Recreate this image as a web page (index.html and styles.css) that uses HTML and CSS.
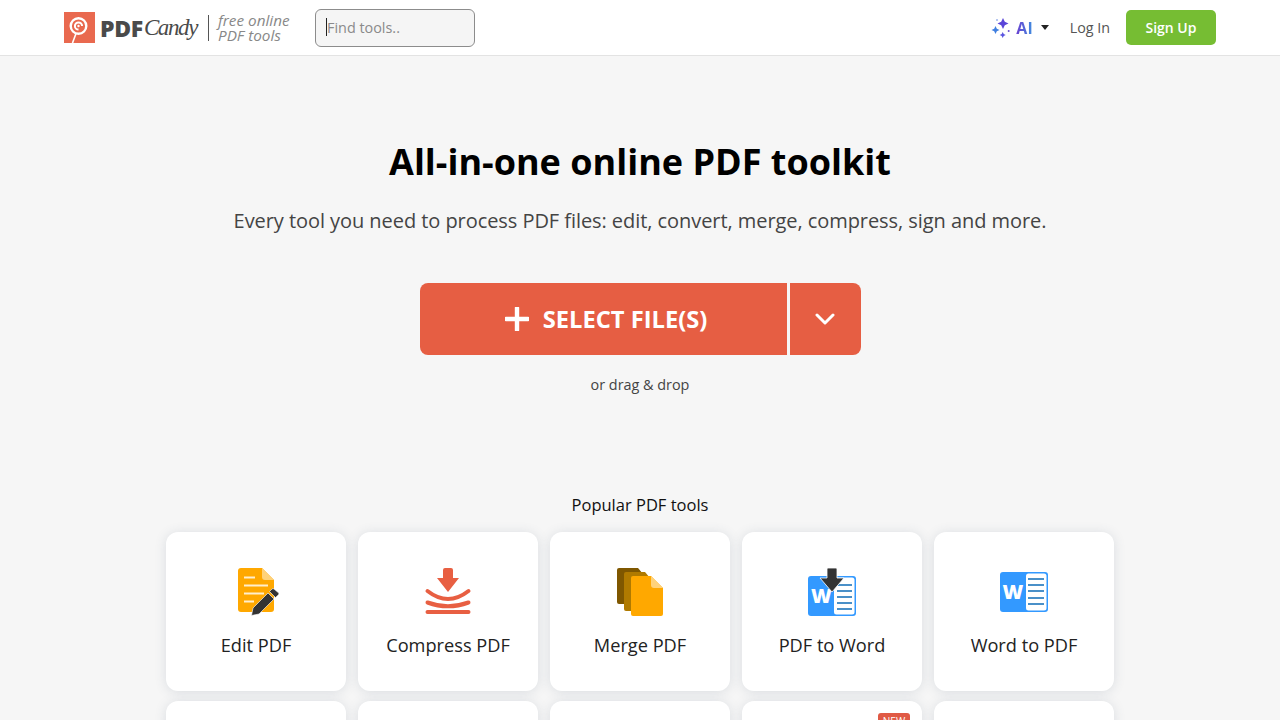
FILE: index.html
```html
<!DOCTYPE html>
<html lang="en">
<head>
    <meta charset="UTF-8">
    <meta name="viewport" content="width=device-width, initial-scale=1.0">
    <title>PDF Candy</title>
    <link rel="stylesheet" href="styles.css">
</head>
<body>
    <header class="header">
        <div class="header-left">
            <a class="logo" href="#">
                <svg class="logo-mark" width="31" height="31" viewBox="0 0 31 31">
                    <rect width="31" height="31" fill="#e9694f"/>
                    <path d="M12 21.5 L8.5 31" stroke="#fff" stroke-width="1.6" fill="none"/>
                    <circle cx="14.5" cy="14" r="7.8" fill="none" stroke="#fff" stroke-width="2.4"/>
                    <path d="M14.5 17.6 A3.6 3.6 0 1 1 18.1 14" fill="none" stroke="#fff" stroke-width="2"/>
                    <circle cx="14.5" cy="14" r="1.2" fill="#fff"/>
                </svg>
                <span class="logo-pdf">PDF</span><span class="logo-candy">Candy</span>
            </a>
            <span class="divider"></span>
            <div class="tagline">free online<br>PDF tools</div>
            <div class="search">
                <input class="search-input" type="text" placeholder="Find tools..">
                <span class="search-caret"></span>
            </div>
        </div>
        <nav class="header-right">
            <a class="ai-link" href="#">
                <svg width="20" height="20" viewBox="0 0 20 20">
                    <path d="M12 0 L13.8 3.7 L17.5 5.5 L13.8 7.3 L12 11 L10.2 7.3 L6.5 5.5 L10.2 3.7 Z" fill="#5a45d8"/>
                    <path d="M4.5 8 L5.8 10.7 L8.5 12 L5.8 13.3 L4.5 16 L3.2 13.3 L0.5 12 L3.2 10.7 Z" fill="#3f7fe0"/>
                    <path d="M11.7 14 L12.7 16 L14.7 17 L12.7 18 L11.7 20 L10.7 18 L8.7 17 L10.7 16 Z" fill="#5a55e0"/>
                    <circle cx="17.7" cy="13" r="1" fill="#6a4fd0"/>
                    <circle cx="6" cy="2" r="0.8" fill="#5a7fe0"/>
                </svg>
                <span class="ai-text">AI</span>
                <span class="ai-caret"></span>
            </a>
            <a class="login" href="#">Log In</a>
            <a class="signup" href="#">Sign Up</a>
        </nav>
    </header>

    <main class="main">
        <h1 class="title">All-in-one online PDF toolkit</h1>
        <p class="subtitle">Every tool you need to process PDF files: edit, convert, merge, compress, sign and more.</p>

        <div class="select-group">
            <button class="select-btn" type="button">
                <svg width="24" height="24" viewBox="0 0 24 24">
                    <path d="M12 1 V23 M1 12 H23" stroke="#fff" stroke-width="4.4" stroke-linecap="round" fill="none"/>
                </svg>
                SELECT FILE(S)
            </button>
            <button class="select-more" type="button" aria-label="More">
                <svg width="20" height="12" viewBox="0 0 20 12">
                    <path d="M2 2 L10 10 L18 2" stroke="#fff" stroke-width="3" stroke-linecap="round" stroke-linejoin="round" fill="none"/>
                </svg>
            </button>
        </div>
        <p class="drop-note">or drag &amp; drop</p>

        <h2 class="tools-title">Popular PDF tools</h2>
        <div class="tools">
            <a class="tool" href="#">
                <svg class="tool-icon" width="48" height="48" viewBox="0 0 48 48">
                    <path d="M9 0 H30 L42 12 V41 a3 3 0 0 1 -3 3 H9 a3 3 0 0 1 -3 -3 V3 a3 3 0 0 1 3 -3 Z" fill="#ffa800"/>
                    <path d="M30 0 L42 12 H33 a3 3 0 0 1 -3 -3 Z" fill="#ffd27a"/>
                    <path d="M12 9.5 H23 M12 17.5 H36 M12 25.5 H32 M12 33.5 H22" stroke="#ffeecc" stroke-width="1.8" fill="none"/>
                    <path d="M19.5 47.5 L21 40 L36 25 L42 31 L27 46 Z M37.5 23.5 L40 21 a1.5 1.5 0 0 1 2 0 L46.5 24.8 a1.5 1.5 0 0 1 0 2 L43.5 29.5 Z" fill="#333" stroke="#fff" stroke-width="0.6"/>
                </svg>
                <span class="tool-name">Edit PDF</span>
            </a>
            <a class="tool" href="#">
                <svg class="tool-icon" width="48" height="48" viewBox="0 0 48 48">
                    <path d="M21 0 H27 a2 2 0 0 1 2 2 V10 H35 L24 24 L13 10 H19 V2 a2 2 0 0 1 2 -2 Z" fill="#e85f42"/>
                    <path d="M3.5 23 Q24 39 44.5 23 M3.5 34.5 Q24 42 44.5 34.5 M3.5 44 H44.5" stroke="#e85f42" stroke-width="4" stroke-linecap="round" fill="none"/>
                </svg>
                <span class="tool-name">Compress PDF</span>
            </a>
            <a class="tool" href="#">
                <svg class="tool-icon" width="48" height="48" viewBox="0 0 48 48">
                    <path d="M3 0 H22 L32 12 V36 H3 a2 2 0 0 1 -2 -2 V2 a2 2 0 0 1 2 -2 Z" fill="#7f5700"/>
                    <path d="M10 4 H29 L39 16 V43 H10 a2 2 0 0 1 -2 -2 V6 a2 2 0 0 1 2 -2 Z" fill="#b07a00"/>
                    <path d="M17 8 H35 L47 20 V46 a2 2 0 0 1 -2 2 H17 a2 2 0 0 1 -2 -2 V10 a2 2 0 0 1 2 -2 Z" fill="#ffa800"/>
                    <path d="M35 8 L47 20 H38 a3 3 0 0 1 -3 -3 Z" fill="#ffd27a"/>
                </svg>
                <span class="tool-name">Merge PDF</span>
            </a>
            <a class="tool" href="#">
                <svg class="tool-icon" width="48" height="48" viewBox="0 0 48 48">
                    <rect y="8" width="48" height="40" rx="3" fill="#3399ff"/>
                    <rect x="26" y="9.5" width="20.5" height="37" rx="2.5" fill="#fff"/>
                    <path d="M29 17 H44 M29 23 H44 M29 29 H44 M29 35 H44 M29 41 H44" stroke="#4a90c8" stroke-width="2.2" fill="none"/>
                    <text class="word-letter" x="13.5" y="35" text-anchor="middle">W</text>
                    <path d="M20 0 H28 a1 1 0 0 1 1 1 V10 H36 L24 24 L12 10 H19 V1 a1 1 0 0 1 1 -1 Z" fill="#333" stroke="#fff" stroke-width="0.8"/>
                </svg>
                <span class="tool-name">PDF to Word</span>
            </a>
            <a class="tool" href="#">
                <svg class="tool-icon" width="48" height="48" viewBox="0 0 48 48">
                    <rect y="4" width="48" height="40" rx="3" fill="#3399ff"/>
                    <rect x="26" y="5.5" width="20.5" height="37" rx="2.5" fill="#fff"/>
                    <path d="M28 11 H44 M28 17 H44 M28 23 H44 M28 30 H44 M28 36 H44" stroke="#4a90c8" stroke-width="2.2" fill="none"/>
                    <text class="word-letter" x="13" y="31" text-anchor="middle">W</text>
                </svg>
                <span class="tool-name">Word to PDF</span>
            </a>
            <div class="tool"></div>
            <div class="tool"></div>
            <div class="tool"></div>
            <div class="tool"><span class="badge">NEW</span></div>
            <div class="tool"></div>
        </div>
    </main>
</body>
</html>
```

FILE: styles.css
```css
html, body {
    height: 100%;
    overflow: hidden;
}
body {
    margin: 0;
    font-family: "Open Sans", sans-serif;
    background-color: #f6f6f6;
    color: #000;
}
a {
    text-decoration: none;
    color: inherit;
}
.header {
    height: 55px;
    background-color: #fff;
    border-bottom: 1px solid #e3e3e3;
    display: flex;
    justify-content: space-between;
    align-items: center;
    padding: 0 64px;
}
.header-left {
    display: flex;
    align-items: center;
}
.logo {
    display: flex;
    align-items: center;
    width: 144px;
}
.logo-mark {
    margin-right: 5px;
    flex-shrink: 0;
}
.logo-pdf {
    font-size: 23px;
    font-weight: 800;
    color: #4a4a4a;
    letter-spacing: -0.3px;
}
.logo-candy {
    font-family: "Liberation Serif", serif;
    font-style: italic;
    font-size: 23px;
    color: #4a4a4a;
    letter-spacing: -1.4px;
    margin-left: 1px;
}
.divider {
    width: 1px;
    height: 26px;
    background-color: #555;
    margin-right: 9px;
}
.tagline {
    font-size: 15.3px;
    line-height: 15px;
    font-style: italic;
    color: #888;
    width: 97px;
}
.search {
    position: relative;
}
.search-input {
    display: block;
    width: 160px;
    height: 38px;
    box-sizing: border-box;
    padding: 0 11px;
    border: 1px solid #8c8c8c;
    border-radius: 6px;
    background-color: #f5f5f5;
    font-family: "Open Sans", sans-serif;
    font-size: 14.4px;
    outline: none;
}
.search-input::placeholder {
    color: #8a8a8a;
    opacity: 1;
}
.search-caret {
    position: absolute;
    left: 11px;
    top: 9px;
    width: 1px;
    height: 18px;
    background-color: #222;
}
.header-right {
    display: flex;
    align-items: center;
}
.ai-link {
    display: flex;
    align-items: center;
    margin-right: 21px;
}
.ai-text {
    font-size: 16px;
    font-weight: 700;
    margin-left: 5px;
    background: linear-gradient(90deg, #6a3fd0, #3f8fe0);
    -webkit-background-clip: text;
    background-clip: text;
    color: transparent;
}
.ai-caret {
    width: 0;
    height: 0;
    margin-left: 8px;
    border-left: 4.5px solid transparent;
    border-right: 4.5px solid transparent;
    border-top: 5px solid #222;
}
.login {
    font-size: 14.3px;
    color: #555;
    margin-right: 16px;
}
.signup {
    display: block;
    width: 90px;
    height: 35px;
    line-height: 35px;
    text-align: center;
    background-color: #76bd33;
    border-radius: 5px;
    color: #fff;
    font-size: 14px;
    font-weight: 600;
}
.main {
    display: flex;
    flex-direction: column;
    align-items: center;
}
.title {
    margin: 81px 0 0;
    font-size: 36px;
    line-height: 50px;
    font-weight: 700;
}
.subtitle {
    margin: 20px 0 0;
    font-size: 20px;
    line-height: 28px;
    letter-spacing: -0.06px;
    color: #444;
}
.select-group {
    display: flex;
    margin-top: 48px;
    gap: 3px;
}
.select-btn,
.select-more {
    height: 72px;
    border: none;
    background-color: #e65e43;
    color: #fff;
    display: flex;
    align-items: center;
    justify-content: center;
    cursor: pointer;
    font-family: "Open Sans", sans-serif;
}
.select-btn {
    width: 367px;
    padding: 0 0 0 6px;
    border-radius: 8px 0 0 8px;
    gap: 14px;
    font-size: 23.7px;
    font-weight: 700;
}
.select-more {
    width: 71px;
    border-radius: 0 8px 8px 0;
}
.drop-note {
    margin: 20px 0 0;
    font-size: 14.4px;
    line-height: 20px;
    color: #444;
}
.tools-title {
    margin: 99px 0 0;
    font-size: 16.5px;
    line-height: 22px;
    font-weight: 400;
    color: #111;
}
.tools {
    display: grid;
    grid-template-columns: repeat(5, 180px);
    column-gap: 12px;
    row-gap: 10px;
    margin-top: 16px;
}
.tool {
    position: relative;
    height: 159px;
    box-sizing: border-box;
    padding-top: 36px;
    background-color: #fff;
    border-radius: 12px;
    box-shadow: 0 1px 12px rgba(60, 80, 110, 0.15);
    display: flex;
    flex-direction: column;
    align-items: center;
}
.tool-icon {
    display: block;
}
.tool-name {
    margin-top: 17px;
    font-size: 18.2px;
    line-height: 25px;
    color: #222;
}
.word-letter {
    font-family: "Open Sans", sans-serif;
    font-size: 20px;
    font-weight: 800;
    fill: #fff;
}
.badge {
    position: absolute;
    top: 12px;
    right: 12px;
    width: 32px;
    height: 16px;
    line-height: 16px;
    text-align: center;
    background-color: #e05a45;
    border-radius: 3px;
    color: #fff;
    font-size: 10px;
}
```
